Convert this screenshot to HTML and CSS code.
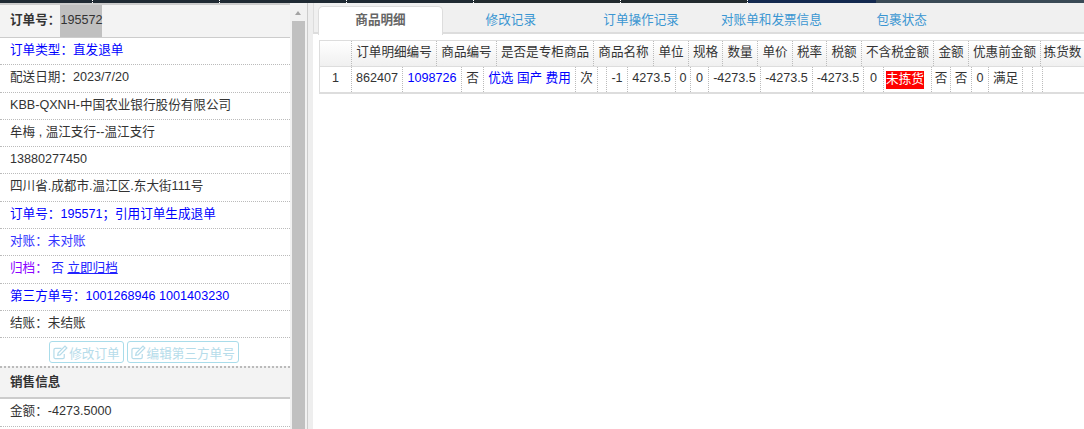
FILE: index.html
```html
<!DOCTYPE html>
<html lang="en">

<head>
    <meta charset="UTF-8">
    <title>订单详情</title>
    <link rel="stylesheet" href="styles.css">
</head>

<body>
    <div class="topstrip">
        <span class="seg seg-a"></span>
        <span class="seg seg-b"></span>
        <span class="seg seg-b"></span>
        <span class="seg seg-b"></span>
        <span class="seg seg-c"></span>
        <span class="seg seg-d"></span>
        <span class="seg seg-navy"></span>
        <span class="seg seg-slate"></span>
    </div>

    <div class="page">
        <aside class="side">
            <h4 class="side-head">订单号：<span class="picked">195572</span></h4>
            <div class="side-row blue">订单类型：直发退单</div>
            <div class="side-row">配送日期：2023/7/20</div>
            <div class="side-row">KBB-QXNH-中国农业银行股份有限公司</div>
            <div class="side-row">牟梅 , 温江支行--温江支行</div>
            <div class="side-row">13880277450</div>
            <div class="side-row">四川省.成都市.温江区.东大街111号</div>
            <div class="side-row blue">订单号：195571；引用订单生成退单</div>
            <div class="side-row soft">对账：未对账</div>
            <div class="side-row purple">归档：<a class="link plain">&nbsp;否</a> <a class="link">立即归档</a></div>
            <div class="side-row blue">第三方单号：1001268946 1001403230</div>
            <div class="side-row">结账：未结账</div>
            <div class="side-actions">
                <button class="btn" disabled>
                    <svg class="icon" viewBox="0 0 16 16"><path d="M12 9.500V13a1.500 1.500 0 0 1-1.500 1.500h-8A1.500 1.500 0 0 1 1 13V5a1.500 1.500 0 0 1 1.500-1.500H9"/><path d="M5.500 8.500 12.800 1.200l2 2-7.300 7.300-2.500.5z"/></svg>修改订单
                </button>
                <button class="btn" disabled>
                    <svg class="icon" viewBox="0 0 16 16"><path d="M12 9.500V13a1.500 1.500 0 0 1-1.500 1.500h-8A1.500 1.500 0 0 1 1 13V5a1.500 1.500 0 0 1 1.500-1.500H9"/><path d="M5.500 8.500 12.800 1.200l2 2-7.300 7.300-2.500.5z"/></svg>编辑第三方单号
                </button>
            </div>
            <h4 class="side-head sales">销售信息</h4>
            <div class="side-row">金额：-4273.5000</div>
        </aside>

        <div class="scrollbar">
            <span class="arrow"></span>
            <span class="thumb"></span>
        </div>
        <div class="gutter"></div>

        <main class="content">
            <nav class="tabs">
                <a class="tab active">商品明细</a>
                <a class="tab">修改记录</a>
                <a class="tab">订单操作记录</a>
                <a class="tab">对账单和发票信息</a>
                <a class="tab">包裹状态</a>
            </nav>

            <div class="grid">
                <div class="grid-head">
                    <span></span>
                    <span>订单明细编号</span>
                    <span>商品编号</span>
                    <span>是否是专柜商品</span>
                    <span>商品名称</span>
                    <span>单位</span>
                    <span>规格</span>
                    <span>数量</span>
                    <span>单价</span>
                    <span>税率</span>
                    <span>税额</span>
                    <span>不含税金额</span>
                    <span>金额</span>
                    <span>优惠前金额</span>
                    <span class="last">拣货数</span>
                </div>
                <div class="grid-row">
                    <span>1</span>
                    <span>862407</span>
                    <span class="blue">1098726</span>
                    <span>否</span>
                    <span class="blue">优选 国产 费用</span>
                    <span>次</span>
                    <span></span>
                    <span>-1</span>
                    <span>4273.5</span>
                    <span>0</span>
                    <span>0</span>
                    <span>-4273.5</span>
                    <span>-4273.5</span>
                    <span>-4273.5</span>
                    <span>0</span>
                    <span><b class="tag-red">未拣货</b></span>
                    <span>否</span>
                    <span>否</span>
                    <span>0</span>
                    <span>满足</span>
                    <span></span>
                    <span></span>
                    <span class="last"></span>
                </div>
            </div>
        </main>
    </div>
</body>

</html>
```

FILE: styles.css
```css
* {
    margin: 0;
    padding: 0;
    box-sizing: border-box;
}

html,
body {
    height: 100%;
    overflow: hidden;
}

body {
    background: #fff;
    color: #333;
    font-family: "Liberation Sans", "Noto Sans CJK SC", sans-serif;
    font-size: 12.6px;
}

.topstrip {
    display: flex;
    height: 3px;
}

.seg {
    border-right: 1px dotted #fff;
}

.seg-a { width: 93px; background: #1f2a33; }
.seg-b { width: 127px; background: #1f2a33; }
.seg-c { width: 147px; background: #222b2f; }
.seg-d { width: 127px; background: #222b2f; }
.seg-navy { width: 128px; background: #13294f; border-right: none; }
.seg-slate { flex: 1; background: #3a4a56; border-right: none; }

.page {
    display: flex;
    height: 426px;
}

/* left column */
.side {
    width: 290px;
    flex: none;
    overflow: hidden;
}

.side-head {
    display: flex;
    align-items: stretch;
    height: 35px;
    padding-left: 10px;
    background: #f3f3f3;
    border-top: 2px solid #ccc;
    border-bottom: 1px solid #ccc;
    font-size: 12.6px;
    font-weight: bold;
    line-height: 31px;
}

.side-head .picked {
    background: #c0c0c0;
    font-weight: normal;
    width: 42px;
}

.side-row {
    height: 27.3px;
    padding-left: 10px;
    border-bottom: 1px dotted #bbb;
    line-height: 25px;
    white-space: nowrap;
}

.blue { color: #00f; }
.soft { color: #33f; }
.purple { color: #80f; }

.link {
    color: #22f;
    text-decoration: underline;
}

.link.plain { text-decoration: none; }

.side-actions {
    display: flex;
    justify-content: center;
    gap: 3px;
    height: 28px;
    padding: 3px 2px 0 0;
}

.btn {
    display: flex;
    align-items: center;
    height: 22px;
    padding: 0 3px;
    background: #fff;
    border: 1px solid #a9dcea;
    border-radius: 3px;
    color: #b6dcea;
    font: inherit;
}

.icon {
    width: 15px;
    height: 15px;
    margin-right: 1px;
    fill: none;
    stroke: #b6dcea;
    stroke-width: 1.300;
}

.side-head.sales {
    height: 33px;
    border-top: 2px dotted #bbb;
    border-bottom: 2px solid #ccc;
    line-height: 28px;
}

/* scrollbar and the strip next to it */
.scrollbar {
    position: relative;
    width: 17px;
    flex: none;
    background: #f1f1f1;
    padding: 18px 2px 0 2px;
}

.arrow {
    position: absolute;
    top: 8px;
    left: 5px;
    border-left: 3.500px solid transparent;
    border-right: 3.500px solid transparent;
    border-bottom: 4px solid #a3a3a3;
}

.thumb {
    display: block;
    height: 100%;
    background: #c0c0c0;
}

.gutter {
    width: 6px;
    flex: none;
    background: #eee;
    border-left: 1px solid #ccc;
}

/* right column */
.content {
    flex: 1;
    min-width: 0;
}

.tabs {
    display: flex;
    height: 31px;
    padding: 3px 0 0 4px;
    background: #f0f0f0;
    border-left: 1px solid #ddd;
    border-bottom: 2px solid #ddd;
}

.tab {
    width: 125px;
    margin-right: 5.300px;
    height: 28px;
    line-height: 26px;
    text-align: center;
    color: #3a96d2;
    border: 1px solid transparent;
    border-bottom: none;
}

.tab.active {
    height: 29px;
    background: #fff;
    color: #666;
    font-weight: bold;
    border-color: #ddd;
    border-radius: 5px 5px 0 0;
}

.grid {
    margin: 6px 0 0 6px;
    border-top: 1px solid #ddd;
    border-left: 1px solid #ddd;
    border-bottom: 2px solid #ddd;
}

.grid-head,
.grid-row {
    display: grid;
    align-items: stretch;
    text-align: center;
    white-space: nowrap;
}

.grid-head {
    grid-template-columns: 32px 85px 60px 97px 60px 35px 34px 35px 35px 34px 35px 72px 35px 72px 1fr;
    height: 26px;
    line-height: 23px;
    background: linear-gradient(#fff, #f0f0f0);
    border-bottom: 1px solid #ddd;
}

.grid-row {
    grid-template-columns: 32px 51px 59px 22px 92px 22px 9px 21px 48px 15px 18px 52px 52px 51px 20px 48px 19px 21px 17px 34px 10px 10px 1fr;
    height: 25px;
    line-height: 23px;
}

.grid-head span,
.grid-row span {
    border-right: 1px dotted #bbb;
}

.grid-head .last,
.grid-row .last {
    border-right: none;
}

.tag-red {
    display: block;
    width: 38px;
    margin: 4px 0 0 2px;
    height: 18px;
    background: #f00;
    color: #fff;
    font-weight: normal;
    line-height: 17px;
}
```
